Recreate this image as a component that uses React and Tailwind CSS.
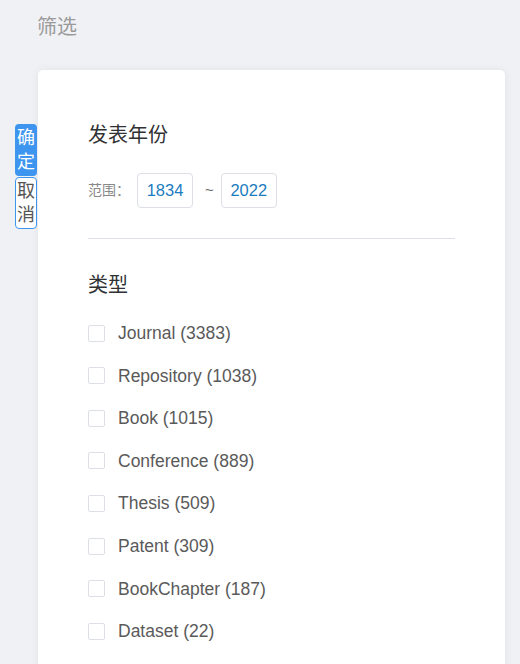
const types = [
  ['Journal', 3383],
  ['Repository', 1038],
  ['Book', 1015],
  ['Conference', 889],
  ['Thesis', 509],
  ['Patent', 309],
  ['BookChapter', 187],
  ['Dataset', 22],
]

function Checkbox() {
  return <span className="block h-[17px] w-[17px] shrink-0 rounded-[2px] border border-[#dcdfe6] bg-white" />
}

export default function App() {
  return (
    <div className="relative h-[664px] overflow-hidden bg-[#f0f1f5] font-['Liberation_Sans','Noto_Sans_CJK_SC',sans-serif]">
      <div className="pl-[37px] pt-[15px] text-[20px] leading-[24px] text-[#9a9a9a]">筛选</div>

      <div className="absolute left-[15px] top-[124px] flex w-[22px] flex-col text-[18px] leading-[24px]">
        <button type="button" className="flex h-[52px] flex-col items-center justify-center rounded-[4px] bg-[#3d95f0] text-white">
          <span>确</span>
          <span>定</span>
        </button>
        <button type="button" className="mt-px flex h-[52px] flex-col items-center justify-center rounded-[4px] border border-[#3d95f0] bg-white text-[#555]">
          <span>取</span>
          <span>消</span>
        </button>
      </div>

      <div className="ml-[38px] mt-[31px] w-[467px] rounded-[5px] bg-white px-[50px] pt-[51px] pb-10 shadow-[0_0_10px_rgba(0,0,0,0.06)]">
        <div className="text-[20px] leading-[28px] text-[#303133]">发表年份</div>
        <div className="mt-[24px] flex items-center">
          <span className="text-[14px] text-[#888]">范围：</span>
          <span className="ml-[7px] flex h-[35px] w-[56px] items-center justify-center rounded-[4px] border border-[#dcdfe6] text-[16.5px] text-[#1b7cc0]">1834</span>
          <span className="ml-[12px] mr-[7px] text-[15px] text-[#666]">~</span>
          <span className="flex h-[35px] w-[56px] items-center justify-center rounded-[4px] border border-[#dcdfe6] text-[16.5px] text-[#1b7cc0]">2022</span>
        </div>
        <div className="mt-[30px] h-px bg-[#dcdfe6]" />
        <div className="mt-[32px] text-[20px] leading-[28px] text-[#303133]">类型</div>
        <div className="mt-[13px] flex flex-col">
          {types.map(([name, n]) => (
            <label key={name} className="flex h-[42.57px] items-center">
              <Checkbox />
              <span className="ml-[13px] text-[17.5px] text-[#5a5a5a]">
                {name} ({n})
              </span>
            </label>
          ))}
        </div>
      </div>
    </div>
  )
}
